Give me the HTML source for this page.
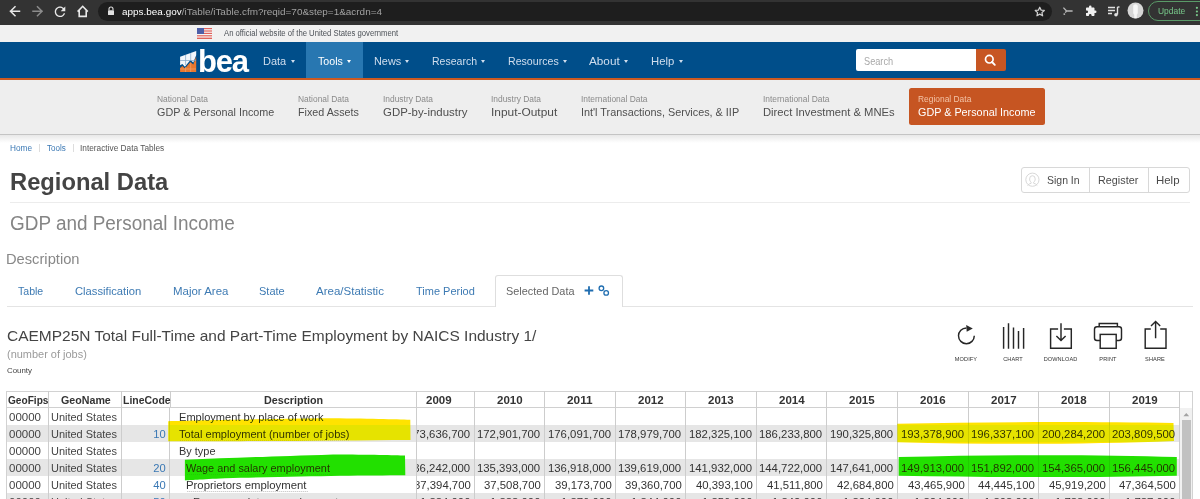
<!DOCTYPE html><html><head><meta charset="utf-8"><style>
*{margin:0;padding:0;box-sizing:border-box}
html,body{width:1200px;height:499px;overflow:hidden;background:#fff;font-family:"Liberation Sans",sans-serif;color:#555}
.a{position:absolute;white-space:nowrap;line-height:1}
svg{position:absolute;overflow:visible}
</style></head><body>
<div style="position:absolute;left:0px;top:0px;width:1200px;height:25px;background:#333333;"></div>
<div style="position:absolute;left:98px;top:1.5px;width:954px;height:19.5px;background:#1e1e1e;border-radius:10px;"></div>
<svg style="left:0;top:0" width="100" height="24" viewBox="0 0 100 24">
<g fill="none" stroke="#e8e8e8" stroke-width="1.5" stroke-linecap="square" stroke-linejoin="miter">
<path d="M10.5 11.2h9M15 6.7L10.5 11.2L15 15.7"/>
</g>
<g fill="none" stroke="#8c8c8c" stroke-width="1.5" stroke-linecap="square">
<path d="M33 11.2h9M37.5 6.7L42 11.2L37.5 15.7"/>
</g>
<path transform="translate(52.1 3.9) scale(0.66)" d="M17.65 6.35C16.2 4.9 14.21 4 12 4c-4.42 0-7.99 3.58-7.99 8s3.57 8 7.99 8c3.73 0 6.84-2.55 7.73-6h-2.08c-.82 2.33-3.04 4-5.65 4-3.31 0-6-2.69-6-6s2.69-6 6-6c1.66 0 3.14.69 4.22 1.78L13 11h7V4l-2.35 2.35z" fill="#e8e8e8"/>
<path d="M77.6 11.6L82.7 6.3L87.8 11.6M79.2 10.2V16.4H86.2V10.2" fill="none" stroke="#e8e8e8" stroke-width="1.6" stroke-linejoin="miter"/>
</svg>
<svg style="left:107px;top:6px" width="8" height="10" viewBox="0 0 8 10">
<path d="M2 4.2V3a2 2 0 0 1 4 0v1.2" fill="none" stroke="#e0e0e0" stroke-width="1.1"/>
<rect x="1" y="4.2" width="6" height="4.8" rx="0.6" fill="#e0e0e0"/>
</svg>
<div class="a" style="left:122.00px;top:6.94px;font-size:9.4px;transform:scaleX(1.0603);transform-origin:0 0"><span style="color:#ffffff">apps.bea.gov</span><span style="color:#a2a2a2">/iTable/iTable.cfm?reqid=70&amp;step=1&amp;acrdn=4</span></div>
<svg style="left:1034px;top:5.5px" width="11.5" height="11.5" viewBox="0 0 24 24">
<path d="M12 2.5l2.9 6.1 6.6.7-4.9 4.5 1.4 6.6L12 17l-5.9 3.4 1.4-6.6-4.9-4.5 6.6-.7z" fill="none" stroke="#cfcfcf" stroke-width="2.6" stroke-linejoin="round"/>
</svg>
<svg style="left:0;top:0" width="1100" height="24" viewBox="0 0 1100 24">
<path d="M1063.4 7.6L1066.6 11H1072.6M1066.6 11L1065.2 12.6" fill="none" stroke="#b8b8b8" stroke-width="1.3"/>
<circle cx="1064.3" cy="14.1" r="0.95" fill="#b8b8b8"/>
</svg>
<svg style="left:1085px;top:4px" width="12" height="14" viewBox="0 0 24 24">
<path d="M20.5 11H19V7c0-1.1-.9-2-2-2h-4V3.5a2.5 2.5 0 0 0-5 0V5H4c-1.1 0-2 .9-2 2v3.8h1.5c1.5 0 2.7 1.2 2.7 2.7S5 16.2 3.5 16.2H2V20c0 1.1.9 2 2 2h3.8v-1.5c0-1.5 1.2-2.7 2.7-2.7s2.7 1.2 2.7 2.7V22H17c1.1 0 2-.9 2-2v-4h1.5a2.5 2.5 0 0 0 0-5z" fill="#f0f0f0"/>
</svg>
<svg style="left:1107px;top:5px" width="13" height="13" viewBox="0 0 13 13">
<path d="M1 2.5h7M1 5.5h7M1 8.5h4" stroke="#e0e0e0" stroke-width="1.4"/>
<path d="M10.5 2v7.5" stroke="#e0e0e0" stroke-width="1.4"/><path d="M10.5 2h2" stroke="#e0e0e0" stroke-width="1.4"/>
<circle cx="9" cy="9.8" r="1.8" fill="#e0e0e0"/>
</svg>
<svg style="left:1127.3px;top:2.4px" width="17" height="17" viewBox="0 0 17 17">
<circle cx="8.5" cy="8.5" r="8" fill="#d6d6d6"/>
<path d="M6.2 4.5c0-1.5 1-2.3 2.3-2.3s2.3.8 2.3 2.3v6c0 1-.4 1.6-1 2v3.8h-2.6v-3.8c-.6-.4-1-1-1-2z" fill="#f6f6f6"/>
</svg>
<div style="position:absolute;left:1148.2px;top:1px;width:70px;height:20.3px;background:transparent;border:1.3px solid #5a9a68;border-radius:10px;"></div>
<div class="a" style="left:1157.80px;top:6.47px;font-size:9.6px;color:#78c88a;font-weight:normal;transform:scaleX(0.8786);transform-origin:0 0;">Update</div>
<svg style="left:1194px;top:5px" width="5" height="14" viewBox="0 0 5 14">
<circle cx="2.9" cy="2.8" r="1.1" fill="#78c88a"/><circle cx="2.9" cy="6.5" r="1.1" fill="#78c88a"/><circle cx="2.9" cy="10.1" r="1.1" fill="#78c88a"/>
</svg>
<div style="position:absolute;left:0px;top:25px;width:1200px;height:17px;background:#f1f1f1;"></div>
<svg style="left:197px;top:28px" width="15" height="11" viewBox="0 0 15 11">
<rect width="15" height="11" fill="#f6f6f6"/>
<g fill="#e0615b"><rect y="0" width="15" height="1.2"/><rect y="2.4" width="15" height="1.2"/><rect y="4.8" width="15" height="1.2"/><rect y="7.2" width="15" height="1.2"/><rect y="9.6" width="15" height="1.4"/></g>
<rect width="7" height="6" fill="#4d5fa8"/>
</svg>
<div class="a" style="left:224.00px;top:29.07px;font-size:8.3px;color:#4d5258;font-weight:normal;transform:scaleX(0.9290);transform-origin:0 0;">An official website of the United States government</div>
<div style="position:absolute;left:0px;top:42px;width:1200px;height:36px;background:#004e8a;"></div>
<div style="position:absolute;left:306px;top:42px;width:57px;height:36px;background:#2877b1;"></div>
<div style="position:absolute;left:0px;top:78px;width:1200px;height:2.2px;background:#cc5a22;"></div>
<svg style="left:0;top:0" width="260" height="80" viewBox="0 0 260 80">
<path d="M180.1 56.8 L196.2 51 L196.2 55.2 L193.3 62.6 L190.4 60 L184.9 66.8 L182.4 63.9 L180.1 65.2 Z" fill="#f4f7fb"/>
<path d="M180.1 68 L182.4 66.1 L184.9 68.4 L190.4 62 L193.3 64.5 L196.2 56.5 L196.2 71.9 L180.1 71.9 Z" fill="#e8772e"/>
<g stroke="#7ea3c6" stroke-width="0.7"><path d="M185.6 55v10M190.7 53v8M180 60.5h16"/></g>
<g stroke="#f1a36f" stroke-width="0.7"><path d="M185.6 67v5M190.7 63v9M180 69h16"/></g>
</svg>
<div class="a " style="left:198.00px;top:45.96px;font-size:31px;color:#ffffff;font-weight:bold;letter-spacing:-1.2px;">bea</div>
<div class="a" style="left:262.80px;top:56.19px;font-size:11.0px;color:#d0deee;font-weight:normal;transform:scaleX(0.9981);transform-origin:0 0;">Data</div>
<div style="position:absolute;left:290.5px;top:60.2px;width:0;height:0;border-left:2.7px solid transparent;border-right:2.7px solid transparent;border-top:3.1px solid #d0deee"></div>
<div class="a" style="left:317.60px;top:56.19px;font-size:11.0px;color:#ffffff;font-weight:normal;transform:scaleX(0.9660);transform-origin:0 0;">Tools</div>
<div style="position:absolute;left:347.0px;top:60.2px;width:0;height:0;border-left:2.7px solid transparent;border-right:2.7px solid transparent;border-top:3.1px solid #ffffff"></div>
<div class="a" style="left:373.60px;top:56.19px;font-size:11.0px;color:#d0deee;font-weight:normal;transform:scaleX(0.9887);transform-origin:0 0;">News</div>
<div style="position:absolute;left:404.59999999999997px;top:60.2px;width:0;height:0;border-left:2.7px solid transparent;border-right:2.7px solid transparent;border-top:3.1px solid #d0deee"></div>
<div class="a" style="left:431.70px;top:56.19px;font-size:11.0px;color:#d0deee;font-weight:normal;transform:scaleX(0.9558);transform-origin:0 0;">Research</div>
<div style="position:absolute;left:481.09999999999997px;top:60.2px;width:0;height:0;border-left:2.7px solid transparent;border-right:2.7px solid transparent;border-top:3.1px solid #d0deee"></div>
<div class="a" style="left:508.30px;top:56.19px;font-size:11.0px;color:#d0deee;font-weight:normal;transform:scaleX(0.9642);transform-origin:0 0;">Resources</div>
<div style="position:absolute;left:563.2px;top:60.2px;width:0;height:0;border-left:2.7px solid transparent;border-right:2.7px solid transparent;border-top:3.1px solid #d0deee"></div>
<div class="a" style="left:589.30px;top:56.19px;font-size:11.0px;color:#d0deee;font-weight:normal;transform:scaleX(1.0681);transform-origin:0 0;">About</div>
<div style="position:absolute;left:623.7px;top:60.2px;width:0;height:0;border-left:2.7px solid transparent;border-right:2.7px solid transparent;border-top:3.1px solid #d0deee"></div>
<div class="a" style="left:650.70px;top:56.19px;font-size:11.0px;color:#d0deee;font-weight:normal;transform:scaleX(1.0297);transform-origin:0 0;">Help</div>
<div style="position:absolute;left:678.7px;top:60.2px;width:0;height:0;border-left:2.7px solid transparent;border-right:2.7px solid transparent;border-top:3.1px solid #d0deee"></div>
<div style="position:absolute;left:856px;top:49.3px;width:121px;height:21.5px;background:#ffffff;border-radius:2px 0 0 2px;"></div>
<div style="position:absolute;left:976px;top:49.3px;width:30px;height:21.5px;background:#c75623;border-radius:0 2px 2px 0;"></div>
<div class="a" style="left:863.70px;top:56.31px;font-size:10.5px;color:#a8a8a8;font-weight:normal;transform:scaleX(0.8748);transform-origin:0 0;">Search</div>
<svg style="left:982.5px;top:52.7px" width="14" height="14" viewBox="0 0 14 14">
<circle cx="6.3" cy="6.2" r="3.8" fill="none" stroke="#fff" stroke-width="1.7"/>
<path d="M9 9l2.8 2.8" stroke="#fff" stroke-width="1.9" stroke-linecap="round"/>
</svg>
<div style="position:absolute;left:0px;top:80.2px;width:1200px;height:53.8px;background:#eeeeee;"></div>
<div style="position:absolute;left:0px;top:134px;width:1200px;height:1px;background:#c4c4c4;"></div>
<div style="position:absolute;left:0px;top:135px;width:1200px;height:8px;background:transparent;background:linear-gradient(#e8e8e8,#ffffff);"></div>
<div class="a" style="left:157.00px;top:94.87px;font-size:8.3px;color:#8a8a8a;font-weight:normal;transform:scaleX(1.0140);transform-origin:0 0;">National Data</div>
<div class="a" style="left:157.00px;top:107.42px;font-size:11.2px;color:#4f4f4f;font-weight:normal;transform:scaleX(0.9638);transform-origin:0 0;">GDP &amp; Personal Income</div>
<div class="a" style="left:298.40px;top:94.87px;font-size:8.3px;color:#8a8a8a;font-weight:normal;transform:scaleX(1.0140);transform-origin:0 0;">National Data</div>
<div class="a" style="left:298.40px;top:107.42px;font-size:11.2px;color:#4f4f4f;font-weight:normal;transform:scaleX(0.9607);transform-origin:0 0;">Fixed Assets</div>
<div class="a" style="left:383.00px;top:94.87px;font-size:8.3px;color:#8a8a8a;font-weight:normal;transform:scaleX(1.0140);transform-origin:0 0;">Industry Data</div>
<div class="a" style="left:383.00px;top:107.42px;font-size:11.2px;color:#4f4f4f;font-weight:normal;transform:scaleX(1.0208);transform-origin:0 0;">GDP-by-industry</div>
<div class="a" style="left:491.20px;top:94.87px;font-size:8.3px;color:#8a8a8a;font-weight:normal;transform:scaleX(1.0140);transform-origin:0 0;">Industry Data</div>
<div class="a" style="left:491.20px;top:107.42px;font-size:11.2px;color:#4f4f4f;font-weight:normal;transform:scaleX(1.0649);transform-origin:0 0;">Input-Output</div>
<div class="a" style="left:581.20px;top:94.87px;font-size:8.3px;color:#8a8a8a;font-weight:normal;transform:scaleX(1.0140);transform-origin:0 0;">International Data</div>
<div class="a" style="left:581.20px;top:107.42px;font-size:11.2px;color:#4f4f4f;font-weight:normal;transform:scaleX(0.9690);transform-origin:0 0;">Int'l Transactions, Services, &amp; IIP</div>
<div class="a" style="left:763.40px;top:94.87px;font-size:8.3px;color:#8a8a8a;font-weight:normal;transform:scaleX(1.0140);transform-origin:0 0;">International Data</div>
<div class="a" style="left:763.40px;top:107.42px;font-size:11.2px;color:#4f4f4f;font-weight:normal;transform:scaleX(1.0037);transform-origin:0 0;">Direct Investment &amp; MNEs</div>
<div style="position:absolute;left:909.4px;top:87.5px;width:136px;height:37.2px;background:#c65522;border-radius:2.5px;"></div>
<div class="a" style="left:918.40px;top:94.87px;font-size:8.3px;color:#f3c4a8;font-weight:normal;transform:scaleX(1.0140);transform-origin:0 0;">Regional Data</div>
<div class="a" style="left:918.40px;top:107.42px;font-size:11.2px;color:#ffffff;font-weight:normal;transform:scaleX(0.9654);transform-origin:0 0;">GDP &amp; Personal Income</div>
<div class="a" style="left:10.00px;top:144.00px;font-size:8.5px;color:#3a78b4;font-weight:normal;transform:scaleX(0.9701);transform-origin:0 0;">Home</div>
<div style="position:absolute;left:39px;top:144.3px;width:1px;height:7.7px;background:#dddddd;"></div>
<div class="a" style="left:47.20px;top:144.00px;font-size:8.5px;color:#3a78b4;font-weight:normal;transform:scaleX(0.9476);transform-origin:0 0;">Tools</div>
<div style="position:absolute;left:72.7px;top:144.3px;width:1px;height:7.7px;background:#dddddd;"></div>
<div class="a" style="left:79.80px;top:144.00px;font-size:8.5px;color:#555555;font-weight:normal;transform:scaleX(0.9756);transform-origin:0 0;">Interactive Data Tables</div>
<div class="a" style="left:9.60px;top:170.06px;font-size:24.5px;color:#444444;font-weight:bold;transform:scaleX(0.9686);transform-origin:0 0;">Regional Data</div>
<div style="position:absolute;left:10px;top:202px;width:1180px;height:1px;background:#ececec;"></div>
<div class="a" style="left:9.60px;top:212.67px;font-size:20.0px;color:#858585;font-weight:normal;transform:scaleX(0.9459);transform-origin:0 0;">GDP and Personal Income</div>
<div style="position:absolute;left:1021px;top:167px;width:168.5px;height:25.5px;background:#ffffff;border:1px solid #d8d8d8;border-radius:3px;"></div>
<div style="position:absolute;left:1088.5px;top:167px;width:1px;height:25.5px;background:#d8d8d8;"></div>
<div style="position:absolute;left:1148px;top:167px;width:1px;height:25.5px;background:#d8d8d8;"></div>
<svg style="left:0;top:0" width="1100" height="200" viewBox="0 0 1100 200">
<circle cx="1032.4" cy="179.7" r="6.6" fill="none" stroke="#d4d4d4" stroke-width="0.9"/>
<path d="M1031.2 183.2v-0.9c-1-.6-1.6-1.9-1.6-3.4a2.8 3.2 0 0 1 5.6 0c0 1.5-.6 2.8-1.6 3.4v0.9c1.6.4 2.9 1.2 3.7 2.3M1031.2 183.2c-1.6.4-2.9 1.2-3.7 2.3" fill="none" stroke="#d4d4d4" stroke-width="0.9"/>
</svg>
<div class="a" style="left:1046.90px;top:174.94px;font-size:11.0px;color:#4a4a4a;font-weight:normal;transform:scaleX(0.9520);transform-origin:0 0;">Sign In</div>
<div class="a" style="left:1098.00px;top:174.94px;font-size:11.0px;color:#4a4a4a;font-weight:normal;transform:scaleX(0.9826);transform-origin:0 0;">Register</div>
<div class="a" style="left:1156.00px;top:174.94px;font-size:11.0px;color:#4a4a4a;font-weight:normal;transform:scaleX(1.0386);transform-origin:0 0;">Help</div>
<div class="a" style="left:6.20px;top:251.72px;font-size:14.8px;color:#888888;font-weight:normal;transform:scaleX(0.9928);transform-origin:0 0;">Description</div>
<div class="a" style="left:18.00px;top:285.52px;font-size:11.2px;color:#3d7ab3;font-weight:normal;transform:scaleX(0.9429);transform-origin:0 0;">Table</div>
<div class="a" style="left:75.00px;top:285.52px;font-size:11.2px;color:#3d7ab3;font-weight:normal;transform:scaleX(1.0041);transform-origin:0 0;">Classification</div>
<div class="a" style="left:172.50px;top:285.52px;font-size:11.2px;color:#3d7ab3;font-weight:normal;transform:scaleX(1.0247);transform-origin:0 0;">Major Area</div>
<div class="a" style="left:259.25px;top:285.52px;font-size:11.2px;color:#3d7ab3;font-weight:normal;transform:scaleX(0.9846);transform-origin:0 0;">State</div>
<div class="a" style="left:316.40px;top:285.52px;font-size:11.2px;color:#3d7ab3;font-weight:normal;transform:scaleX(1.0306);transform-origin:0 0;">Area/Statistic</div>
<div class="a" style="left:416.20px;top:285.52px;font-size:11.2px;color:#3d7ab3;font-weight:normal;transform:scaleX(0.9822);transform-origin:0 0;">Time Period</div>
<div style="position:absolute;left:6.5px;top:305.5px;width:1186px;height:1.2px;background:#e4e4e4;"></div>
<div style="position:absolute;left:495px;top:275.3px;width:128px;height:31.5px;background:#ffffff;border:1px solid #dedede;border-bottom:none;border-radius:3px 3px 0 0;"></div>
<div class="a" style="left:506.30px;top:285.52px;font-size:11.2px;color:#666666;font-weight:normal;transform:scaleX(0.9749);transform-origin:0 0;">Selected Data</div>
<svg style="left:0;top:0" width="700" height="320" viewBox="0 0 700 320">
<path d="M589 286.2v8.6M584.6 290.5h8.7" stroke="#1f6db0" stroke-width="1.8"/>
<circle cx="601.4" cy="288.3" r="2.3" fill="none" stroke="#1f6db0" stroke-width="1.3"/>
<circle cx="606.2" cy="292.9" r="2.3" fill="none" stroke="#1f6db0" stroke-width="1.3"/>
</svg>
<div class="a" style="left:6.50px;top:328.57px;font-size:14.8px;color:#444444;font-weight:normal;transform:scaleX(1.0462);transform-origin:0 0;">CAEMP25N Total Full-Time and Part-Time Employment by NAICS Industry 1/</div>
<div class="a" style="left:6.50px;top:349.41px;font-size:10.5px;color:#9a9a9a;font-weight:normal;transform:scaleX(1.0438);transform-origin:0 0;">(number of jobs)</div>
<div class="a" style="left:6.50px;top:367.35px;font-size:7.5px;color:#444444;font-weight:normal;transform:scaleX(1.0522);transform-origin:0 0;">County</div>
<svg style="left:940px;top:315px" width="250" height="40" viewBox="940 315 250 40">
<g fill="none" stroke="#262626" stroke-width="1.45">
<path d="M974.3 335.8A7.9 7.9 0 1 1 966.4 327.9"/>
<path d="M1003.6 348.8V327.1M1008.5 348.8V323.3M1013.5 348.8V327.6M1018.5 348.8V331M1023.6 348.8V328.1"/>
<path d="M1058.1 329H1050.6V348.3H1071.3V329H1063.9M1061 323.2V340.3M1056.4 335.9L1061 340.5L1065.6 335.9"/>
<path d="M1099.2 326.7V323.4H1117.4V326.7"/>
<rect x="1094.5" y="326.8" width="27" height="13.8" rx="2.5"/>
<rect x="1100.2" y="334.4" width="16" height="13.9" fill="#fff"/>
<path d="M1150.8 329H1145.2V348.3H1166V329H1160.2M1155.6 338.3V321.8M1151 326L1155.6 321.6L1160.2 326"/>
</g>
<path d="M966.2 325L972.8 328.4L966.7 331.7Z" fill="#2a2a2a"/>
</svg>
<div class="a" style="left:766.00px;width:400px;text-align:center;top:357.26px;font-size:5.6px;color:#333333;font-weight:normal;letter-spacing:0.1px;">MODIFY</div>
<div class="a" style="left:813.00px;width:400px;text-align:center;top:357.26px;font-size:5.6px;color:#333333;font-weight:normal;letter-spacing:0.1px;">CHART</div>
<div class="a" style="left:860.50px;width:400px;text-align:center;top:357.26px;font-size:5.6px;color:#333333;font-weight:normal;letter-spacing:0.1px;">DOWNLOAD</div>
<div class="a" style="left:908.00px;width:400px;text-align:center;top:357.26px;font-size:5.6px;color:#333333;font-weight:normal;letter-spacing:0.1px;">PRINT</div>
<div class="a" style="left:955.00px;width:400px;text-align:center;top:357.26px;font-size:5.6px;color:#333333;font-weight:normal;letter-spacing:0.1px;">SHARE</div>
<div style="position:absolute;left:6px;top:391px;width:1187px;height:108px;background:#ffffff;border:1px solid #d2d2d2;border-bottom:none;"></div>
<div style="position:absolute;left:7px;top:424.7px;width:1172.5px;height:17.0px;background:#e6e6e6;"></div>
<div style="position:absolute;left:7px;top:458.7px;width:1172.5px;height:17.0px;background:#e6e6e6;"></div>
<div style="position:absolute;left:7px;top:492.7px;width:1172.5px;height:17.0px;background:#e6e6e6;"></div>
<div style="position:absolute;left:1180px;top:408px;width:12px;height:91px;background:#f1f1f1;"></div>
<div style="position:absolute;left:1182px;top:420px;width:8.8px;height:80px;background:#c1c1c1;"></div>
<svg style="left:0;top:0" width="1200" height="499" viewBox="0 0 1200 499"><path d="M1183.4 416.3L1186.3 413L1189.2 416.3Z" fill="#a3a3a3"/></svg>
<div style="position:absolute;left:6px;top:407px;width:1174px;height:1px;background:#d0d0d0;"></div>
<div style="position:absolute;left:48px;top:391px;width:1px;height:108px;background:#cdcdcd;"></div>
<div style="position:absolute;left:121px;top:391px;width:1px;height:108px;background:#cdcdcd;"></div>
<div style="position:absolute;left:170px;top:391px;width:1px;height:16px;background:#cdcdcd;"></div>
<div style="position:absolute;left:169px;top:407px;width:1px;height:92px;background:#cdcdcd;"></div>
<div style="position:absolute;left:416px;top:391px;width:1px;height:108px;background:#cdcdcd;"></div>
<div style="position:absolute;left:474px;top:391px;width:1px;height:108px;background:#cdcdcd;"></div>
<div style="position:absolute;left:544px;top:391px;width:1px;height:108px;background:#cdcdcd;"></div>
<div style="position:absolute;left:615px;top:391px;width:1px;height:108px;background:#cdcdcd;"></div>
<div style="position:absolute;left:685px;top:391px;width:1px;height:108px;background:#cdcdcd;"></div>
<div style="position:absolute;left:756px;top:391px;width:1px;height:108px;background:#cdcdcd;"></div>
<div style="position:absolute;left:826px;top:391px;width:1px;height:108px;background:#cdcdcd;"></div>
<div style="position:absolute;left:897px;top:391px;width:1px;height:108px;background:#cdcdcd;"></div>
<div style="position:absolute;left:968px;top:391px;width:1px;height:108px;background:#cdcdcd;"></div>
<div style="position:absolute;left:1038px;top:391px;width:1px;height:108px;background:#cdcdcd;"></div>
<div style="position:absolute;left:1109px;top:391px;width:1px;height:108px;background:#cdcdcd;"></div>
<div style="position:absolute;left:1179px;top:391px;width:1px;height:108px;background:#cdcdcd;"></div>
<div class="a" style="left:7.50px;top:394.89px;font-size:11.0px;color:#333333;font-weight:bold;transform:scaleX(0.9202);transform-origin:0 0;">GeoFips</div>
<div class="a" style="left:60.60px;top:394.89px;font-size:11.0px;color:#333333;font-weight:bold;transform:scaleX(0.9699);transform-origin:0 0;">GeoName</div>
<div class="a" style="left:122.50px;top:394.89px;font-size:11.0px;color:#333333;font-weight:bold;transform:scaleX(0.9518);transform-origin:0 0;">LineCode</div>
<div class="a" style="left:264.00px;top:394.89px;font-size:11.0px;color:#333333;font-weight:bold;transform:scaleX(0.9783);transform-origin:0 0;">Description</div>
<div class="a" style="left:426.20px;top:394.89px;font-size:11.0px;color:#333333;font-weight:bold;transform:scaleX(1.0460);transform-origin:0 0;">2009</div>
<div class="a" style="left:496.70px;top:394.89px;font-size:11.0px;color:#333333;font-weight:bold;transform:scaleX(1.0460);transform-origin:0 0;">2010</div>
<div class="a" style="left:567.20px;top:394.89px;font-size:11.0px;color:#333333;font-weight:bold;transform:scaleX(1.0730);transform-origin:0 0;">2011</div>
<div class="a" style="left:637.70px;top:394.89px;font-size:11.0px;color:#333333;font-weight:bold;transform:scaleX(1.0460);transform-origin:0 0;">2012</div>
<div class="a" style="left:708.20px;top:394.89px;font-size:11.0px;color:#333333;font-weight:bold;transform:scaleX(1.0460);transform-origin:0 0;">2013</div>
<div class="a" style="left:778.70px;top:394.89px;font-size:11.0px;color:#333333;font-weight:bold;transform:scaleX(1.0460);transform-origin:0 0;">2014</div>
<div class="a" style="left:849.20px;top:394.89px;font-size:11.0px;color:#333333;font-weight:bold;transform:scaleX(1.0460);transform-origin:0 0;">2015</div>
<div class="a" style="left:920.20px;top:394.89px;font-size:11.0px;color:#333333;font-weight:bold;transform:scaleX(1.0460);transform-origin:0 0;">2016</div>
<div class="a" style="left:990.70px;top:394.89px;font-size:11.0px;color:#333333;font-weight:bold;transform:scaleX(1.0460);transform-origin:0 0;">2017</div>
<div class="a" style="left:1061.20px;top:394.89px;font-size:11.0px;color:#333333;font-weight:bold;transform:scaleX(1.0460);transform-origin:0 0;">2018</div>
<div class="a" style="left:1131.70px;top:394.89px;font-size:11.0px;color:#333333;font-weight:bold;transform:scaleX(1.0460);transform-origin:0 0;">2019</div>
<div class="a" style="left:8.70px;top:412.13px;font-size:11.3px;color:#444444;font-weight:normal;transform:scaleX(1.0183);transform-origin:0 0;">00000</div>
<div class="a" style="left:51.40px;top:412.13px;font-size:11.3px;color:#444444;font-weight:normal;transform:scaleX(0.9715);transform-origin:0 0;">United States</div>
<div class="a" style="left:178.70px;top:412.13px;font-size:11.3px;color:#333333;font-weight:normal;transform:scaleX(0.9789);transform-origin:0 0;">Employment by place of work</div>
<div class="a" style="left:8.70px;top:429.13px;font-size:11.3px;color:#444444;font-weight:normal;transform:scaleX(1.0183);transform-origin:0 0;">00000</div>
<div class="a" style="left:51.40px;top:429.13px;font-size:11.3px;color:#444444;font-weight:normal;transform:scaleX(0.9715);transform-origin:0 0;">United States</div>
<div class="a" style="right:1034.30px;top:429.22px;font-size:11.2px;color:#3a78b4;font-weight:normal;text-align:right;">10</div>
<div class="a" style="left:178.70px;top:429.13px;font-size:11.3px;color:#333333;font-weight:normal;transform:scaleX(0.9806);transform-origin:0 0;">Total employment (number of jobs)</div>
<div style="position:absolute;left:179.5px;top:439.6px;width:170.6px;height:1px;background:transparent;background:repeating-linear-gradient(90deg,#cfcfcf 0 1px,#eeeeee 1px 2px);"></div>
<div class="a" style="left:8.70px;top:446.13px;font-size:11.3px;color:#444444;font-weight:normal;transform:scaleX(1.0183);transform-origin:0 0;">00000</div>
<div class="a" style="left:51.40px;top:446.13px;font-size:11.3px;color:#444444;font-weight:normal;transform:scaleX(0.9715);transform-origin:0 0;">United States</div>
<div class="a" style="left:178.70px;top:446.13px;font-size:11.3px;color:#333333;font-weight:normal;transform:scaleX(0.9685);transform-origin:0 0;">By type</div>
<div class="a" style="left:8.70px;top:463.13px;font-size:11.3px;color:#444444;font-weight:normal;transform:scaleX(1.0183);transform-origin:0 0;">00000</div>
<div class="a" style="left:51.40px;top:463.13px;font-size:11.3px;color:#444444;font-weight:normal;transform:scaleX(0.9715);transform-origin:0 0;">United States</div>
<div class="a" style="right:1034.30px;top:463.22px;font-size:11.2px;color:#3a78b4;font-weight:normal;text-align:right;">20</div>
<div class="a" style="left:185.90px;top:463.13px;font-size:11.3px;color:#333333;font-weight:normal;transform:scaleX(0.9661);transform-origin:0 0;">Wage and salary employment</div>
<div style="position:absolute;left:186.7px;top:473.6px;width:144.0px;height:1px;background:transparent;background:repeating-linear-gradient(90deg,#cfcfcf 0 1px,#eeeeee 1px 2px);"></div>
<div class="a" style="left:8.70px;top:480.13px;font-size:11.3px;color:#444444;font-weight:normal;transform:scaleX(1.0183);transform-origin:0 0;">00000</div>
<div class="a" style="left:51.40px;top:480.13px;font-size:11.3px;color:#444444;font-weight:normal;transform:scaleX(0.9715);transform-origin:0 0;">United States</div>
<div class="a" style="right:1034.30px;top:480.22px;font-size:11.2px;color:#3a78b4;font-weight:normal;text-align:right;">40</div>
<div class="a" style="left:185.90px;top:480.13px;font-size:11.3px;color:#333333;font-weight:normal;transform:scaleX(1.0046);transform-origin:0 0;">Proprietors employment</div>
<div style="position:absolute;left:186.5px;top:490.6px;width:121.3px;height:1px;background:transparent;background:repeating-linear-gradient(90deg,#cfcfcf 0 1px,#eeeeee 1px 2px);"></div>
<div class="a" style="left:8.70px;top:497.13px;font-size:11.3px;color:#444444;font-weight:normal;transform:scaleX(1.0183);transform-origin:0 0;">00000</div>
<div class="a" style="left:51.40px;top:497.13px;font-size:11.3px;color:#444444;font-weight:normal;transform:scaleX(0.9715);transform-origin:0 0;">United States</div>
<div class="a" style="right:1034.30px;top:497.22px;font-size:11.2px;color:#3a78b4;font-weight:normal;text-align:right;">50</div>
<div class="a" style="left:192.70px;top:497.13px;font-size:11.3px;color:#333333;font-weight:normal;transform:scaleX(0.9806);transform-origin:0 0;">Farm proprietors employment</div>
<div style="position:absolute;left:0;top:0;width:1200px;height:499px;clip-path:inset(0 20.5px 0 417px)"><div class="a" style="left:407.40px;top:429.13px;font-size:11.3px;color:#333333;font-weight:normal;transform:scaleX(1.0041);transform-origin:0 0;">173,636,700</div>
<div class="a" style="left:477.40px;top:429.13px;font-size:11.3px;color:#333333;font-weight:normal;transform:scaleX(1.0041);transform-origin:0 0;">172,901,700</div>
<div class="a" style="left:548.40px;top:429.13px;font-size:11.3px;color:#333333;font-weight:normal;transform:scaleX(1.0041);transform-origin:0 0;">176,091,700</div>
<div class="a" style="left:618.40px;top:429.13px;font-size:11.3px;color:#333333;font-weight:normal;transform:scaleX(1.0041);transform-origin:0 0;">178,979,700</div>
<div class="a" style="left:689.40px;top:429.13px;font-size:11.3px;color:#333333;font-weight:normal;transform:scaleX(1.0041);transform-origin:0 0;">182,325,100</div>
<div class="a" style="left:759.40px;top:429.13px;font-size:11.3px;color:#333333;font-weight:normal;transform:scaleX(1.0041);transform-origin:0 0;">186,233,800</div>
<div class="a" style="left:830.40px;top:429.13px;font-size:11.3px;color:#333333;font-weight:normal;transform:scaleX(1.0041);transform-origin:0 0;">190,325,800</div>
<div class="a" style="left:901.40px;top:429.13px;font-size:11.3px;color:#333333;font-weight:normal;transform:scaleX(1.0041);transform-origin:0 0;">193,378,900</div>
<div class="a" style="left:971.40px;top:429.13px;font-size:11.3px;color:#333333;font-weight:normal;transform:scaleX(1.0041);transform-origin:0 0;">196,337,100</div>
<div class="a" style="left:1042.40px;top:429.13px;font-size:11.3px;color:#333333;font-weight:normal;transform:scaleX(1.0041);transform-origin:0 0;">200,284,200</div>
<div class="a" style="left:1112.40px;top:429.13px;font-size:11.3px;color:#333333;font-weight:normal;transform:scaleX(1.0041);transform-origin:0 0;">203,809,500</div>
<div class="a" style="left:407.40px;top:463.13px;font-size:11.3px;color:#333333;font-weight:normal;transform:scaleX(1.0041);transform-origin:0 0;">136,242,000</div>
<div class="a" style="left:477.40px;top:463.13px;font-size:11.3px;color:#333333;font-weight:normal;transform:scaleX(1.0041);transform-origin:0 0;">135,393,000</div>
<div class="a" style="left:548.40px;top:463.13px;font-size:11.3px;color:#333333;font-weight:normal;transform:scaleX(1.0041);transform-origin:0 0;">136,918,000</div>
<div class="a" style="left:618.40px;top:463.13px;font-size:11.3px;color:#333333;font-weight:normal;transform:scaleX(1.0041);transform-origin:0 0;">139,619,000</div>
<div class="a" style="left:689.40px;top:463.13px;font-size:11.3px;color:#333333;font-weight:normal;transform:scaleX(1.0041);transform-origin:0 0;">141,932,000</div>
<div class="a" style="left:759.40px;top:463.13px;font-size:11.3px;color:#333333;font-weight:normal;transform:scaleX(1.0041);transform-origin:0 0;">144,722,000</div>
<div class="a" style="left:830.40px;top:463.13px;font-size:11.3px;color:#333333;font-weight:normal;transform:scaleX(1.0041);transform-origin:0 0;">147,641,000</div>
<div class="a" style="left:901.40px;top:463.13px;font-size:11.3px;color:#333333;font-weight:normal;transform:scaleX(1.0041);transform-origin:0 0;">149,913,000</div>
<div class="a" style="left:971.40px;top:463.13px;font-size:11.3px;color:#333333;font-weight:normal;transform:scaleX(1.0041);transform-origin:0 0;">151,892,000</div>
<div class="a" style="left:1042.40px;top:463.13px;font-size:11.3px;color:#333333;font-weight:normal;transform:scaleX(1.0041);transform-origin:0 0;">154,365,000</div>
<div class="a" style="left:1112.40px;top:463.13px;font-size:11.3px;color:#333333;font-weight:normal;transform:scaleX(1.0041);transform-origin:0 0;">156,445,000</div>
<div class="a" style="left:413.71px;top:480.13px;font-size:11.3px;color:#333333;font-weight:normal;transform:scaleX(1.0041);transform-origin:0 0;">37,394,700</div>
<div class="a" style="left:483.71px;top:480.13px;font-size:11.3px;color:#333333;font-weight:normal;transform:scaleX(1.0041);transform-origin:0 0;">37,508,700</div>
<div class="a" style="left:554.71px;top:480.13px;font-size:11.3px;color:#333333;font-weight:normal;transform:scaleX(1.0041);transform-origin:0 0;">39,173,700</div>
<div class="a" style="left:624.71px;top:480.13px;font-size:11.3px;color:#333333;font-weight:normal;transform:scaleX(1.0041);transform-origin:0 0;">39,360,700</div>
<div class="a" style="left:695.71px;top:480.13px;font-size:11.3px;color:#333333;font-weight:normal;transform:scaleX(1.0041);transform-origin:0 0;">40,393,100</div>
<div class="a" style="left:766.55px;top:480.13px;font-size:11.3px;color:#333333;font-weight:normal;transform:scaleX(1.0041);transform-origin:0 0;">41,511,800</div>
<div class="a" style="left:836.71px;top:480.13px;font-size:11.3px;color:#333333;font-weight:normal;transform:scaleX(1.0041);transform-origin:0 0;">42,684,800</div>
<div class="a" style="left:907.71px;top:480.13px;font-size:11.3px;color:#333333;font-weight:normal;transform:scaleX(1.0041);transform-origin:0 0;">43,465,900</div>
<div class="a" style="left:977.71px;top:480.13px;font-size:11.3px;color:#333333;font-weight:normal;transform:scaleX(1.0041);transform-origin:0 0;">44,445,100</div>
<div class="a" style="left:1048.71px;top:480.13px;font-size:11.3px;color:#333333;font-weight:normal;transform:scaleX(1.0041);transform-origin:0 0;">45,919,200</div>
<div class="a" style="left:1118.71px;top:480.13px;font-size:11.3px;color:#333333;font-weight:normal;transform:scaleX(1.0041);transform-origin:0 0;">47,364,500</div>
<div class="a" style="left:420.02px;top:497.13px;font-size:11.3px;color:#333333;font-weight:normal;transform:scaleX(1.0041);transform-origin:0 0;">1,884,000</div>
<div class="a" style="left:490.02px;top:497.13px;font-size:11.3px;color:#333333;font-weight:normal;transform:scaleX(1.0041);transform-origin:0 0;">1,888,000</div>
<div class="a" style="left:561.02px;top:497.13px;font-size:11.3px;color:#333333;font-weight:normal;transform:scaleX(1.0041);transform-origin:0 0;">1,876,000</div>
<div class="a" style="left:631.02px;top:497.13px;font-size:11.3px;color:#333333;font-weight:normal;transform:scaleX(1.0041);transform-origin:0 0;">1,844,000</div>
<div class="a" style="left:702.02px;top:497.13px;font-size:11.3px;color:#333333;font-weight:normal;transform:scaleX(1.0041);transform-origin:0 0;">1,856,000</div>
<div class="a" style="left:772.02px;top:497.13px;font-size:11.3px;color:#333333;font-weight:normal;transform:scaleX(1.0041);transform-origin:0 0;">1,842,000</div>
<div class="a" style="left:843.02px;top:497.13px;font-size:11.3px;color:#333333;font-weight:normal;transform:scaleX(1.0041);transform-origin:0 0;">1,824,000</div>
<div class="a" style="left:914.02px;top:497.13px;font-size:11.3px;color:#333333;font-weight:normal;transform:scaleX(1.0041);transform-origin:0 0;">1,824,000</div>
<div class="a" style="left:984.02px;top:497.13px;font-size:11.3px;color:#333333;font-weight:normal;transform:scaleX(1.0041);transform-origin:0 0;">1,808,000</div>
<div class="a" style="left:1055.02px;top:497.13px;font-size:11.3px;color:#333333;font-weight:normal;transform:scaleX(1.0041);transform-origin:0 0;">1,788,000</div>
<div class="a" style="left:1125.02px;top:497.13px;font-size:11.3px;color:#333333;font-weight:normal;transform:scaleX(1.0041);transform-origin:0 0;">1,787,000</div>
</div>
<svg style="left:0;top:0;mix-blend-mode:darken" width="1200" height="499" viewBox="0 0 1200 499">
<path d="M168.2 421.2 C190 420.5 260 419 322 418.2 C370 418.4 395 419.2 410.3 419.8 L410.5 439.9 C360 440.2 300 440.8 240 441.2 C200 441.5 180 441.2 168.2 441.2 Z" fill="#ffe300"/>
<path d="M897.3 423.7 C1000 421.5 1100 421.8 1173.5 423.1 L1174 441 C1100 444 1000 445 897.3 442.3 Z" fill="#ffe300"/>
<path d="M184.9 459.8 C230 457.8 270 456.6 333 454.4 C370 454.5 395 455 405 455.5 L405.3 475.3 C360 475.5 310 476.1 225 478.3 C200 479.5 190 480.2 184.9 480.4 Z" fill="#22e000"/>
<path d="M898.7 457 C1000 454.5 1100 454.5 1176.8 457 L1176.8 475.7 C1100 477.5 1000 477.5 898.7 475.7 Z" fill="#22e000"/>
</svg>
</body></html>
